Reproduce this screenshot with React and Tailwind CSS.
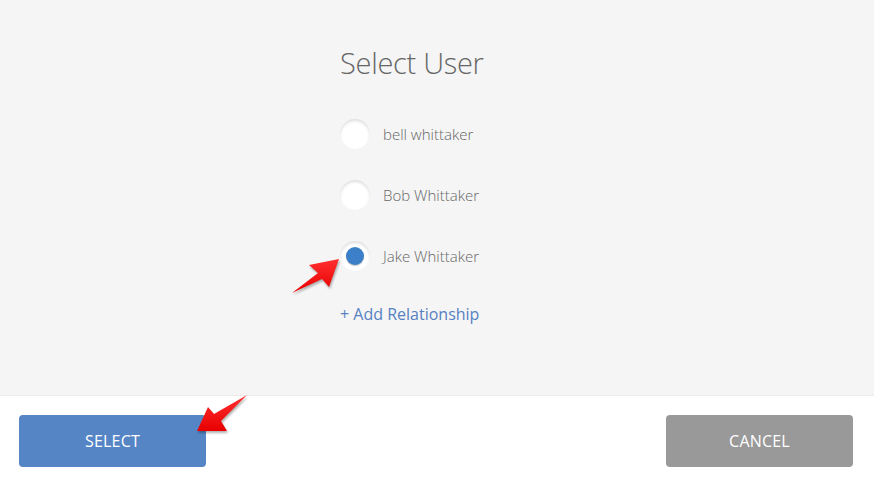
import React, { useState } from "react";

const users = ["bell whittaker", "Bob Whittaker", "Jake Whittaker"];

// red annotation arrows drawn as tapered shapes
function Arrow({ className, points, id }) {
  return (
    <svg className={className} viewBox="0 0 62 48" fill="none">
      <defs>
        <linearGradient id={id} x1="0" y1="0" x2="0" y2="1">
          <stop offset="0" stopColor="#ff3030" />
          <stop offset="1" stopColor="#e80000" />
        </linearGradient>
      </defs>
      <polygon
        points={points}
        fill={`url(#${id})`}
        style={{ filter: "drop-shadow(1px 2px 1px rgba(0,0,0,0.3))" }}
      />
    </svg>
  );
}

export default function App() {
  const [selected, setSelected] = useState(2);

  return (
    <div
      className="relative w-[874px] h-[484px] bg-white overflow-hidden"
      style={{ fontFamily: "'Open Sans', 'Liberation Sans', sans-serif" }}
    >
      {/* TOP PANEL */}
      <div className="h-[396px] bg-[#f5f5f5] border-b border-[#ececec] pt-[44px] pl-[340px]">
        <h1 className="text-[29px] font-light text-[#666] leading-[38px] tracking-[-0.3px]">
          Select User
        </h1>

        <div className="mt-[37px] flex flex-col gap-[31px]">
          {users.map((u, i) => (
            <label
              key={u}
              className="flex items-center h-[30px] cursor-pointer"
              onClick={() => setSelected(i)}
            >
              <span className="w-[30px] h-[30px] rounded-full bg-white flex items-center justify-center shadow-[inset_0_2px_3px_rgba(0,0,0,0.13)]">
                {selected === i && (
                  <span className="w-[18px] h-[18px] rounded-full bg-[#3b80c9] shadow-[0_1px_1px_rgba(0,0,0,0.25)]" />
                )}
              </span>
              <span className="ml-[13px] text-[15px] font-light text-[#666]">
                {u}
              </span>
            </label>
          ))}
        </div>

        <div className="mt-[32px] text-[16px] text-[#5681c2] leading-[22px]">
          + Add Relationship
        </div>
      </div>

      {/* FOOTER BUTTONS */}
      <div className="flex justify-between px-[19px] pt-[19px]">
        <button className="w-[187px] h-[52px] rounded-[4px] bg-[#5585c5] text-white text-[16px] tracking-[0.2px]">
          SELECT
        </button>
        <button className="mr-[2px] w-[187px] h-[52px] rounded-[4px] bg-[#999] text-white text-[16px] tracking-[0.2px]">
          CANCEL
        </button>
      </div>

      {/* annotation arrows */}
      <Arrow
        id="a1"
        className="absolute left-[285px] top-[250px] w-[62px] h-[48px]"
        points="7,43 33,23 24,15 54,9 44,37 37,29"
      />
      <Arrow
        id="a2"
        className="absolute left-[190px] top-[390px] w-[62px] h-[48px]"
        points="7,41 18,17 24,24 57,5 31,31 37,41"
      />
    </div>
  );
}
